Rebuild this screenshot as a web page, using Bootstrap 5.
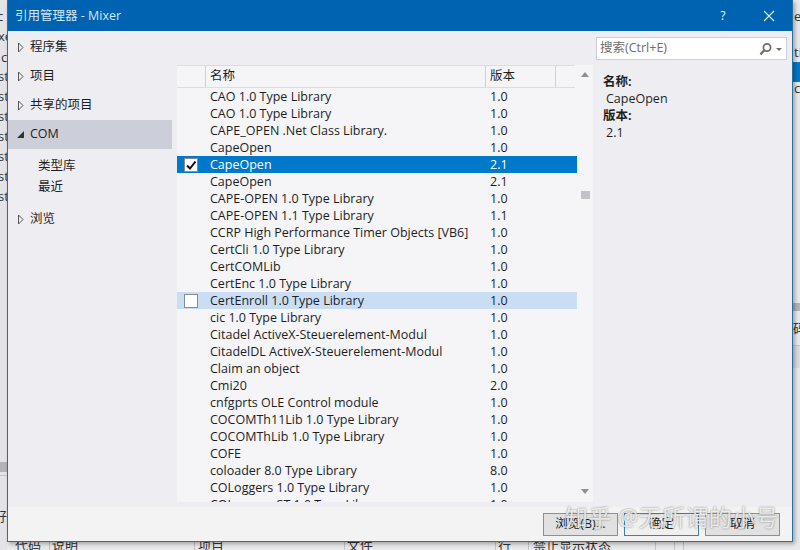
<!DOCTYPE html>
<html lang="en">
<head>
  <meta charset="UTF-8">
  <title>引用管理器 - Mixer</title>
  <link href="https://cdn.jsdelivr.net/npm/bootstrap@5.3.0/dist/css/bootstrap.min.css" rel="stylesheet">
  <style>
    html, body { height: 550px; overflow: hidden; }
    body { position: relative; background: #e9e9ec; font-family: "Open Sans", "Noto Sans CJK SC", sans-serif; font-size: 12.5px; color: #1e1e1e; }
    .backdrop-text { position: absolute; font-size: 13px; line-height: 16px; color: #333; white-space: nowrap; }
    .backdrop-band { position: absolute; }
    .dlg { position: absolute; left: 7px; top: 0; width: 786px; height: 542px; background: #eeeef2; border: 1px solid #2a6f9f; border-top: 0; display: flex; flex-direction: column; box-shadow: 2px 2px 4px rgba(0,0,0,.3); }
    .dlg-title { height: 31px; flex: none; background: #0063b1; color: #d3e6f5; font-size: 12.5px; padding: 1px 0 0 7px; }
    .dlg-title .tb-btn { width: 46px; text-align: center; color: #e6f0f8; }
    .dlg-body { flex: 1; min-height: 0; }
    .side { width: 169px; flex: none; padding: 2px 5px 0 0; }
    .side-item { height: 29px; padding-left: 8px; gap: 5px; }
    .side-item.on { background: #ccced9; }
    .side-sub { height: 21px; padding-left: 30px; }
    .sub-wrap { padding: 7px 0 7px; }
    .mid { width: 416px; flex: none; padding-top: 34px; }
    .list-pane { background: #f5f5f7; height: 437px; overflow: hidden; position: relative; }
    .list-head { height: 23px; display: flex; align-items: center; border-top: 1px solid #dcdce2; border-bottom: 1px solid #dcdce2; margin-right: 18px; }
    .hc0 { width: 29px; height: 100%; border-right: 1px solid #d0d0d8; flex: none; }
    .hc1 { width: 280px; padding-left: 4px; height: 100%; border-right: 1px solid #d0d0d8; flex: none; display: flex; align-items: center; }
    .hc2 { width: 70px; padding-left: 4px; height: 100%; border-right: 1px solid #d0d0d8; flex: none; display: flex; align-items: center; }
    .row-item { height: 17px; line-height: 17px; display: flex; margin-right: 16px; white-space: nowrap; }
    .row-item .c-check { width: 29px; flex: none; display: flex; align-items: center; justify-content: center; padding-right: 2px; }
    .row-item .c-name { width: 280px; flex: none; padding-left: 4px; }
    .row-item .c-ver { padding-left: 4px; }
    .row-item.sel { background: #0079cb; color: #fff; }
    .row-item.hov { background: #c9def5; }
    .chk { width: 14px; height: 14px; background: #fff; border: 1px solid #8a8a92; display: block; }
    .sb { position: absolute; right: 0; top: 0; bottom: 0; width: 20px; }
    .sb i { position: absolute; display: block; }
    .sb .up { left: 8px; top: 7px; border: 4.5px solid transparent; border-top: 0; border-bottom: 5px solid #8e8e96; }
    .sb .dn { left: 8px; bottom: 8px; border: 4.5px solid transparent; border-bottom: 0; border-top: 5px solid #8e8e96; }
    .sb .th { left: 8px; top: 126px; width: 9px; height: 8px; background: #c2c3c9; }
    .info { flex: 1; padding: 0 0 0 3px; }
    .search-box { height: 23px; margin: 6px 5px 0 0; background: #fff; border: 1px solid #cccedb; color: #6d6d6d; padding: 0 4px 0 3px; }
    .info-text { padding: 13px 0 0 7px; line-height: 17px; }
    .info-text b { display: block; font-weight: 700; }
    .info-text span { display: block; padding-left: 3px; }
    .dlg-foot { height: 34px; flex: none; background: #f3f3f3; gap: 6px; padding: 6px 12px 0 0; }
    .dlg-foot button { width: 75px; height: 23px; padding: 0; background: #e1e1e1; border: 1px solid #8f8f8f; border-radius: 0; color: #1e1e1e; font-size: 12.5px; line-height: 1; }
    .dlg-foot button.pri { background: #f0f0f0; border-color: #3c7fb1; }
    .watermark { position: absolute; left: 565px; top: 500px; font-size: 23px; color: rgba(255,255,255,.8); text-shadow: 0 0 2px rgba(70,70,70,.7); white-space: nowrap; letter-spacing: .3px; }
  </style>
</head>
<body>
  <div id="backdrop"></div>

  <div class="dlg">
    <div class="dlg-title d-flex align-items-center justify-content-between">
      <span>引用管理器 - Mixer</span>
      <div class="d-flex align-items-center">
        <span class="tb-btn">?</span>
        <span class="tb-btn">
          <svg width="12" height="12" viewBox="0 0 12 12"><path d="M1 1 11 11M11 1 1 11" stroke="#e6f0f8" stroke-width="1.1" fill="none"/></svg>
        </span>
      </div>
    </div>
    <div class="dlg-body d-flex">
      <div class="side" id="side"></div>
      <div class="mid">
        <div class="list-pane">
          <div class="list-head">
            <div class="hc0"></div>
            <div class="hc1">名称</div>
            <div class="hc2">版本</div>
          </div>
          <div id="rows"></div>
          <div class="sb"><i class="up"></i><i class="th"></i><i class="dn"></i></div>
        </div>
      </div>
      <div class="info">
        <div class="search-box d-flex align-items-center justify-content-between">
          <span>搜索(Ctrl+E)</span>
          <svg width="24" height="14" viewBox="0 0 24 14"><circle cx="9" cy="5.5" r="3.6" fill="none" stroke="#6f6f6f" stroke-width="1.8"/><path d="M6.5 8 2.5 12.5" stroke="#6f6f6f" stroke-width="2.4"/><path d="M18 6h6l-3 3z" fill="#6f6f6f"/></svg>
        </div>
        <div class="info-text">
          <b>名称:</b>
          <span>CapeOpen</span>
          <b>版本:</b>
          <span>2.1</span>
        </div>
      </div>
    </div>
    <div class="dlg-foot d-flex justify-content-end align-items-start">
      <button type="button">浏览(B)...</button>
      <button type="button" class="pri">确定</button>
      <button type="button">取消</button>
    </div>
  </div>
  <div class="watermark">知乎 @无所谓的小号</div>

  <script>
    const sideItems = [
      { t: "程序集" }, { t: "项目" }, { t: "共享的项目" },
      { t: "COM", open: true, subs: ["类型库", "最近"] },
      { t: "浏览" }
    ];
    const rows = [
      ["CAO 1.0 Type Library", "1.0"], ["CAO 1.0 Type Library", "1.0"],
      ["CAPE_OPEN .Net Class Library.", "1.0"], ["CapeOpen", "1.0"],
      ["CapeOpen", "2.1", "sel"], ["CapeOpen", "2.1"],
      ["CAPE-OPEN 1.0 Type Library", "1.0"], ["CAPE-OPEN 1.1 Type Library", "1.1"],
      ["CCRP High Performance Timer Objects [VB6]", "1.0"], ["CertCli 1.0 Type Library", "1.0"],
      ["CertCOMLib", "1.0"], ["CertEnc 1.0 Type Library", "1.0"],
      ["CertEnroll 1.0 Type Library", "1.0", "hov"], ["cic 1.0 Type Library", "1.0"],
      ["Citadel ActiveX-Steuerelement-Modul", "1.0"], ["CitadelDL ActiveX-Steuerelement-Modul", "1.0"],
      ["Claim an object", "1.0"], ["Cmi20", "2.0"],
      ["cnfgprts OLE Control module", "1.0"], ["COCOMTh11Lib 1.0 Type Library", "1.0"],
      ["COCOMThLib 1.0 Type Library", "1.0"], ["COFE", "1.0"],
      ["coloader 8.0 Type Library", "8.0"], ["COLoggers 1.0 Type Library", "1.0"],
      ["COLoggers ST 1.0 Type Library", "1.0"]
    ];

    // bits of the IDE window that stick out behind the dialog
    const bands = [
      [0, 0, 7, 550, "#e4e4e8"],
      [0, 462, 7, 10, "#b4b4b8"], [0, 475, 7, 1, "#c8c8cc"],
      [793, 62, 7, 20, "#0079cb"], [793, 303, 7, 8, "#b4b4b8"],
      [793, 345, 7, 1, "#c8c8cc"], [793, 346, 7, 22, "#dcdce0"],
      [49, 542, 1, 8, "#c4c4c8"], [194, 542, 1, 8, "#c4c4c8"], [344, 542, 1, 8, "#c4c4c8"],
      [495, 542, 1, 8, "#c4c4c8"], [528, 542, 1, 8, "#c4c4c8"], [655, 542, 1, 8, "#c4c4c8"],
      [674, 542, 1, 8, "#c4c4c8"], [683, 542, 1, 8, "#c4c4c8"]
    ];
    const texts = [
      ["c", -3, 8], ["xe", -2, 28], ["c", 1, 49],
      ["st", -2, 68], ["st", -2, 88], ["st", -2, 108], ["st", -2, 128], ["st", -2, 148], ["st", -2, 168], ["st", -2, 188],
      ["好", -6, 508],
      ["er", 794, 8], ["ti", 794, 44], ["cs", 794, 80], ["码", 793, 320],
      ["代码", 15, 537], ["说明", 52, 537], ["项目", 198, 537], ["文件", 347, 537], ["行", 498, 537], ["禁止显示状态", 533, 537]
    ];
    document.getElementById("backdrop").innerHTML =
      bands.map(b => `<div class="backdrop-band" style="left:${b[0]}px;top:${b[1]}px;width:${b[2]}px;height:${b[3]}px;background:${b[4]}"></div>`).join("") +
      texts.map(t => `<div class="backdrop-text" style="left:${t[1]}px;top:${t[2]}px">${t[0]}</div>`).join("");

    const arrowOpen = '<svg width="9" height="9" viewBox="0 0 9 9"><path d="M8 1v7H1z" fill="#333"/></svg>';
    const arrowClosed = '<svg width="9" height="11" viewBox="0 0 9 11"><path d="M2.5 1 7 5.5 2.5 10z" fill="none" stroke="#555"/></svg>';

    document.getElementById("side").innerHTML = sideItems.map(it => {
      let h = `<div class="side-item d-flex align-items-center ${it.open ? "on" : ""}">${it.open ? arrowOpen : arrowClosed}<span>${it.t}</span></div>`;
      if (it.subs) h += `<div class="sub-wrap">` + it.subs.map(s => `<div class="side-sub d-flex align-items-center">${s}</div>`).join("") + `</div>`;
      return h;
    }).join("");

    document.getElementById("rows").innerHTML = rows.map(r => {
      let box = "";
      if (r[2] === "sel") box = '<span class="chk"><svg width="12" height="12" viewBox="0 0 12 12" class="d-block"><path d="M2 6.5 5 9.5 10.5 2.5" fill="none" stroke="#111" stroke-width="2"/></svg></span>';
      if (r[2] === "hov") box = '<span class="chk"></span>';
      return `<div class="row-item ${r[2] || ""}"><div class="c-check">${box}</div><div class="c-name">${r[0]}</div><div class="c-ver">${r[1]}</div></div>`;
    }).join("");
  </script>
  <script src="https://cdn.jsdelivr.net/npm/bootstrap@5.3.0/dist/js/bootstrap.bundle.min.js"></script>
</body>
</html>
